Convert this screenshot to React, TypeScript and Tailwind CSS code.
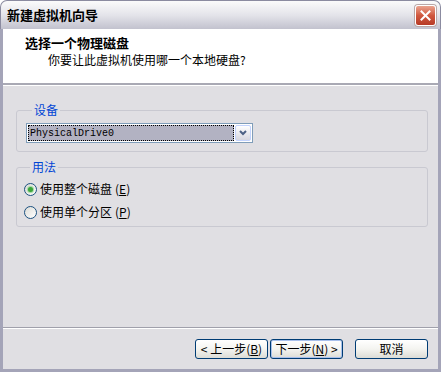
import React from 'react';

const cjk = { fontFamily: '"Noto Sans CJK SC", "Liberation Sans", sans-serif' };

function CloseButton() {
    return (
        <div className="flex h-[21px] w-[21px] items-center justify-center rounded-[3px] border border-white bg-linear-to-b from-[#e9a38f] via-[#d0583f] to-[#b73a26] shadow-[0_0_0_1px_#b9a8a8]">
            <svg width="11" height="11" viewBox="0 0 11 11">
                <path d="M1.5 1.5 L9.5 9.5 M9.5 1.5 L1.5 9.5" stroke="#fff" strokeWidth="2" strokeLinecap="square" />
            </svg>
        </div>
    );
}

function Radio({ checked, label, accel }: { checked?: boolean; label: string; accel: string }) {
    return (
        <div className="flex h-[20px] items-center">
            <div className="flex h-[13px] w-[13px] items-center justify-center rounded-full border border-[#1c5180] bg-linear-to-br from-[#dcdcd7] to-white">
                {checked && <div className="h-[5px] w-[5px] rounded-full bg-[#3aa53a] shadow-[0_0_1px_1px_#9fd69f]" />}
            </div>
            <span className="ml-[3px] text-[12px] leading-[14px] text-black">
                {label}
                <span className="ml-[3px]">(<u>{accel}</u>)</span>
            </span>
        </div>
    );
}

function WizButton({ children, isDefault }: { children: React.ReactNode; isDefault?: boolean }) {
    return (
        <button
            className={`flex h-[20px] w-[73px] items-center justify-center rounded-[3px] border border-[#003c74] bg-linear-to-b from-white via-[#f4f4f0] to-[#dcdcd6] text-[12px] leading-[14px] text-black ${
                isDefault ? 'shadow-[inset_0_0_0_1px_#a8c0ec]' : ''
            }`}
        >
            {children}
        </button>
    );
}

export default function App() {
    return (
        <div className="w-[441px] h-[372px] bg-white" style={cjk}>
            <div className="flex h-full flex-col">
                {/* title bar */}
                <div className="flex h-[29px] shrink-0 items-center justify-between rounded-t-[7px] border-x border-t border-[#8b8ba0] bg-linear-to-b from-[#fbfbfb] via-[#e4e4ea] to-[#c2c2ce] pl-[6px] pr-[4px]">
                    <span className="text-[13px] font-bold leading-[16px] text-black">新建虚拟机向导</span>
                    <CloseButton />
                </div>

                <div className="flex flex-1 flex-col border-x-[3px] border-b-[3px] border-[#a4a4b8] bg-[#e0dfe3]">
                    {/* header */}
                    <div className="h-[56px] shrink-0 border-b-2 border-b-[#a9a9b4] bg-white pt-[6px]">
                        <div className="pl-[22px] text-[13px] font-bold leading-[16px] text-black">选择一个物理磁盘</div>
                        <div className="mt-[1px] pl-[45px] text-[12px] leading-[16px] text-black">你要让此虚拟机使用哪一个本地硬盘?</div>
                    </div>

                    {/* body */}
                    <div className="flex-1 border-t border-white pl-[13px] pr-[10px] pt-[17px]">
                        <fieldset className="rounded-[3px] border border-[#c9c9d1] pb-[8px] pl-[9px]">
                            <legend className="ml-[6px] px-[2px] text-[12px] leading-[14px] text-[#0046d5]">设备</legend>
                            <div className="mt-[6px] flex h-[20px] w-[227px] border border-[#7f9db9] bg-white p-[1px]">
                                <div className="flex flex-1 items-center border border-dotted border-black bg-[#b2b2c2] pl-[1px] text-[10px] text-black" style={{ fontFamily: '"Liberation Mono", monospace' }}>
                                    PhysicalDrive0
                                </div>
                                <div className="ml-[1px] flex w-[16px] items-center justify-center rounded-[2px] border border-[#c3d3fd] bg-linear-to-b from-white to-[#d7d7e0]">
                                    <svg width="8" height="6" viewBox="0 0 8 6">
                                        <path d="M1 1 L4 4 L7 1" stroke="#4d6185" strokeWidth="2" fill="none" />
                                    </svg>
                                </div>
                            </div>
                        </fieldset>

                        <fieldset className="mt-[8px] rounded-[3px] border border-[#c9c9d1] pb-[4px] pl-[7px]">
                            <legend className="ml-[6px] px-[2px] text-[12px] leading-[14px] text-[#0046d5]">用法</legend>
                            <div className="mt-[5px] flex flex-col gap-[3px]">
                                <Radio checked label="使用整个磁盘" accel="E" />
                                <Radio label="使用单个分区" accel="P" />
                            </div>
                        </fieldset>
                    </div>

                    {/* footer */}
                    <div className="h-[42px] shrink-0 border-t border-[#a0a0ab]">
                        <div className="flex h-full items-start justify-end border-t border-white pr-[10px] pt-[10px]">
                            <WizButton>
                                &lt; 上一步(<u>B</u>)
                            </WizButton>
                            <div className="ml-[2px]">
                                <WizButton isDefault>
                                    下一步(<u>N</u>) &gt;
                                </WizButton>
                            </div>
                            <div className="ml-[12px]">
                                <WizButton>取消</WizButton>
                            </div>
                        </div>
                    </div>
                </div>
            </div>
        </div>
    );
}
